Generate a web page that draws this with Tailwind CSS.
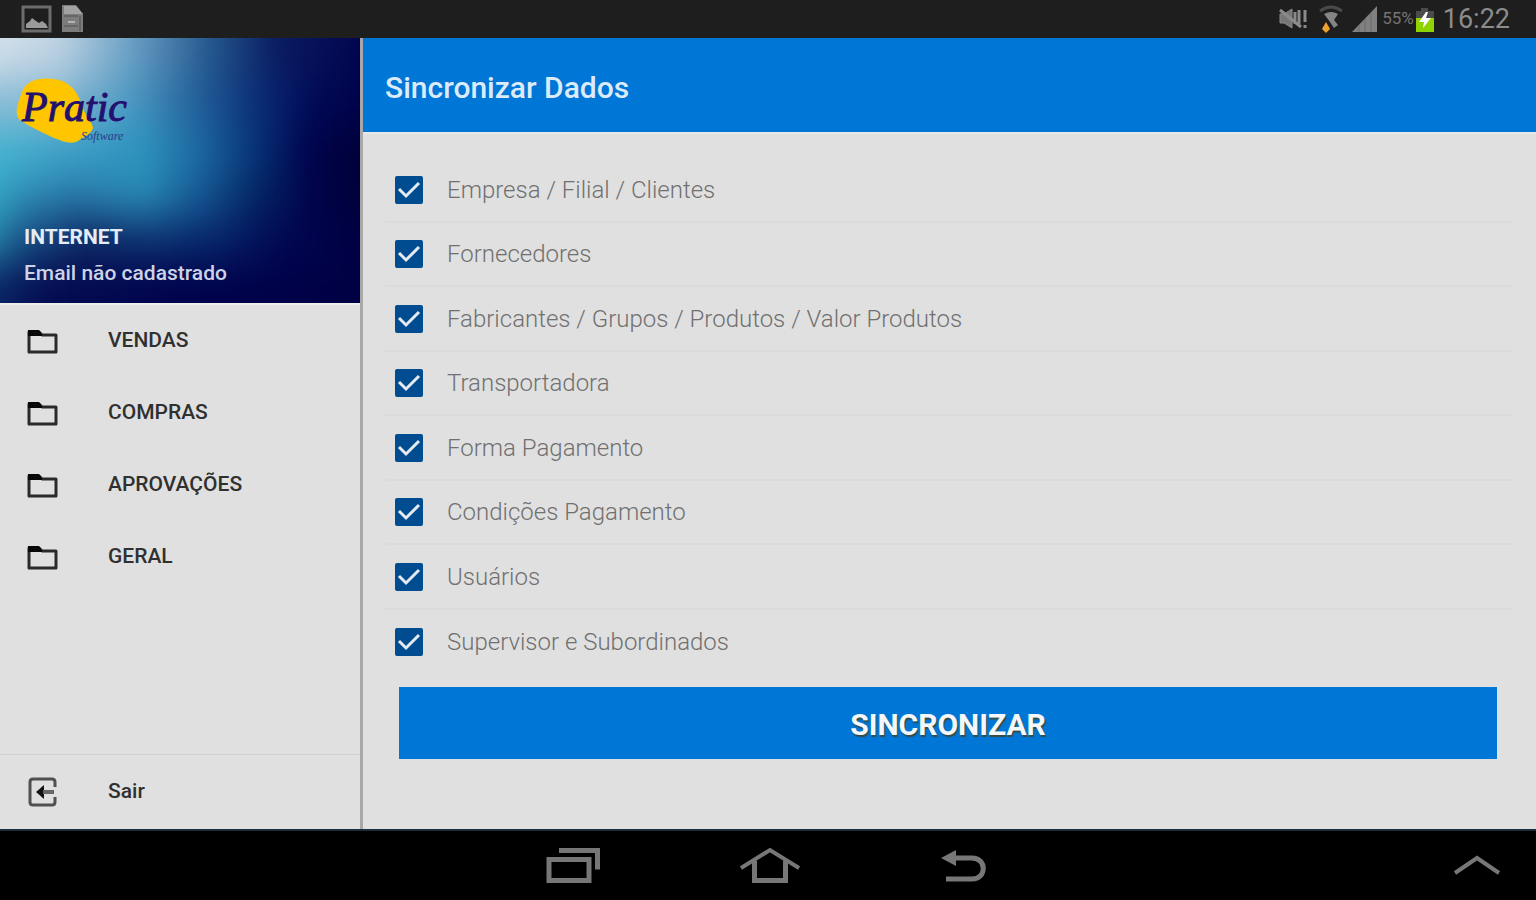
<!DOCTYPE html>
<html lang="pt-BR">
<head>
    <meta charset="UTF-8">
    <meta name="viewport" content="width=device-width, initial-scale=1.0">
    <title>Sincronizar Dados - Pratic</title>
    <script src="https://cdn.jsdelivr.net/npm/@tailwindcss/browser@4"></script>
</head>
<body class="flex flex-col min-h-screen bg-[#e0e0e0] font-[Roboto,sans-serif]">

    <!-- Barra de status -->
    <div class="flex items-center justify-between h-[38px] pl-[21px] pr-[26px] bg-[#1e1e1e] text-[#8c8c8c]">
        <div class="flex items-center gap-2">
            <svg class="w-8 h-7" viewBox="0 0 32 28" fill="none">
                <rect x="2" y="2" width="27" height="24" stroke="#6c6c6c" stroke-width="3"/>
                <path d="M5 23v-4l4-3 2-3 4 3 3 2 3-2 4 3 2 4z" fill="#9a9a9a"/>
            </svg>
            <svg class="w-6 h-7" viewBox="0 0 24 28">
                <path d="M1 0h14l7 9v18H1z" fill="#7c7c7c"/>
                <path d="M3 1h12l7 8H3z" fill="#a2a2a2"/>
                <path d="M3 11h14M3 21h14M19 11v15" stroke="#666" stroke-width="2"/>
                <path d="M7 17h7" stroke="#b4b4b4" stroke-width="2"/>
            </svg>
        </div>
        <div class="flex items-center">
            <svg class="w-8 h-6 mr-2" viewBox="0 0 32 24" fill="none" stroke="#8a8a8a" stroke-width="3">
                <path d="M1 7h4l8-5v19l-8-5H1z" fill="#777" stroke-width="1"/>
                <path d="M1 3l21 17M16 5v12M20 3v15M26 3v12M26 18v3"/>
            </svg>
            <svg class="w-6 h-7 mr-[9px]" viewBox="0 0 24 28" fill="none">
                <path d="M1 6q11-8 22 0" stroke="#4a4a4a" stroke-width="3"/>
                <path d="M5 9q7-4 14 0l-4 6 4 5-4 3-4-6z" fill="#858585"/>
                <path d="M7 17l4 7-4 4-4-4z" fill="#f0a030"/>
            </svg>
            <svg class="w-[26px] h-7" viewBox="0 0 26 28">
                <path d="M0 27L25 1v26z" fill="#808080"/>
                <path d="M7 20v7M13 14v13M19 8v19" stroke="#6a6a6a" stroke-width="1"/>
            </svg>
            <span class="ml-1 text-[17px] text-[#747474]">55%</span>
            <svg class="w-5 h-7 ml-px" viewBox="0 0 20 28">
                <path d="M6 3h7v3h6v8H1V6h5z" fill="#4b4b4b"/>
                <path d="M1 13h18v14H1z" fill="#8fd400"/>
                <path d="M11 7l-7 10h5l-1 6 8-10h-5l2-6z" fill="#fff"/>
            </svg>
            <span class="ml-2 text-[27px]">16:22</span>
        </div>
    </div>

    <div class="flex flex-1">
        <!-- Menu lateral -->
        <aside class="flex flex-col w-[363px] shrink-0 border-r-3 border-[#a8a8a8]">
            <header class="grid h-[267px] border-b-2 border-[#eeeeee] overflow-hidden">
                <svg class="col-start-1 row-start-1 w-full h-[265px]" viewBox="0 0 360 265" preserveAspectRatio="none">
                    <defs>
                        <linearGradient id="faixa1">
                            <stop offset="0.2" stop-color="#d2dfea"/>
                            <stop offset="0.3" stop-color="#bcd2e2"/>
                            <stop offset="0.42" stop-color="#6a9fc4"/>
                            <stop offset="0.55" stop-color="#24588e"/>
                            <stop offset="0.66" stop-color="#0a1c62"/>
                            <stop offset="0.83" stop-color="#00004a"/>
                        </linearGradient>
                        <linearGradient id="faixa2">
                            <stop offset="0.2" stop-color="#8cbcd6"/>
                            <stop offset="0.3" stop-color="#86b6d2"/>
                            <stop offset="0.42" stop-color="#4a98c2"/>
                            <stop offset="0.53" stop-color="#225e9a"/>
                            <stop offset="0.62" stop-color="#0c3278"/>
                            <stop offset="0.72" stop-color="#010a58"/>
                            <stop offset="0.83" stop-color="#000046"/>
                        </linearGradient>
                        <linearGradient id="faixa3">
                            <stop offset="0.2" stop-color="#44b2d0"/>
                            <stop offset="0.3" stop-color="#3ea2c8"/>
                            <stop offset="0.44" stop-color="#2c92be"/>
                            <stop offset="0.54" stop-color="#1a669e"/>
                            <stop offset="0.63" stop-color="#063074"/>
                            <stop offset="0.71" stop-color="#000450"/>
                            <stop offset="0.78" stop-color="#00003a"/>
                        </linearGradient>
                        <linearGradient id="faixa4">
                            <stop offset="0.17" stop-color="#34acc8"/>
                            <stop offset="0.25" stop-color="#2c88b2"/>
                            <stop offset="0.32" stop-color="#2676a6"/>
                            <stop offset="0.44" stop-color="#2888b4"/>
                            <stop offset="0.53" stop-color="#165a94"/>
                            <stop offset="0.62" stop-color="#042866"/>
                            <stop offset="0.72" stop-color="#00034a"/>
                            <stop offset="0.8" stop-color="#00003a"/>
                        </linearGradient>
                        <linearGradient id="faixa5">
                            <stop offset="0.16" stop-color="#2a98b6"/>
                            <stop offset="0.25" stop-color="#164a80"/>
                            <stop offset="0.34" stop-color="#0e2864"/>
                            <stop offset="0.46" stop-color="#0c3070"/>
                            <stop offset="0.56" stop-color="#06246a"/>
                            <stop offset="0.68" stop-color="#010652"/>
                            <stop offset="0.8" stop-color="#000042"/>
                        </linearGradient>
                        <linearGradient id="faixa6">
                            <stop offset="0.16" stop-color="#0c2c6a"/>
                            <stop offset="0.28" stop-color="#040c50"/>
                            <stop offset="0.5" stop-color="#00024c"/>
                            <stop offset="0.8" stop-color="#000044"/>
                        </linearGradient>
                        <filter id="borrao" x="-10%" y="-10%" width="120%" height="120%" color-interpolation-filters="sRGB">
                            <feGaussianBlur stdDeviation="10 20"/>
                        </filter>
                    </defs>
                    <g filter="url(#borrao)">
                        <rect x="-120" y="-80" width="600" height="118" fill="url(#faixa1)"/>
                        <rect x="-120" y="38" width="600" height="50" fill="url(#faixa2)"/>
                        <rect x="-120" y="88" width="600" height="50" fill="url(#faixa3)"/>
                        <rect x="-120" y="138" width="600" height="42" fill="url(#faixa4)"/>
                        <rect x="-120" y="180" width="600" height="45" fill="url(#faixa5)"/>
                        <rect x="-120" y="225" width="600" height="120" fill="url(#faixa6)"/>
                    </g>
                </svg>
                <div class="col-start-1 row-start-1 z-10 flex flex-col pl-6">
                    <svg class="w-[120px] h-[68px] mt-[39px] -ml-2" viewBox="0 0 120 68" role="img" aria-label="Pratic Software">
                        <path d="M6 15C10 3 24 0 38 2C54 4 62 15 67 31C70 40 76 45 77 51C74 58 67 60 62 64C55 68 46 64 38 61C26 55 14 50 4 43C-2 38 1 28 6 15z" fill="#ffc600"/>
                        <text x="6" y="44" font-family="Liberation Serif, serif" font-style="italic" font-size="42" fill="#24106e" stroke="#24106e">Pratic</text>
                        <text x="65" y="63" font-family="Liberation Serif, serif" font-style="italic" font-size="12" fill="#2c3c84">Software</text>
                    </svg>
                    <p class="mt-[76px] text-[21px] leading-8 font-bold text-[#e4edf5]">INTERNET</p>
                    <p class="mt-1 text-[21px] leading-8 font-medium text-[#cdd3e6]">Email não cadastrado</p>
                </div>
            </header>

            <nav class="flex flex-col text-[21px] font-medium text-[#303030]">
                <a href="#vendas" class="flex items-center h-[72px] pl-[26px] gap-[50px]">
                    <svg class="w-8 h-7" viewBox="0 0 32 28" fill="none"><path d="M3 5h10l3 3h14v17H3z" stroke="#2a2a2a" stroke-width="3" stroke-linejoin="round"/><path d="M2 3h11l3 4v2H2z" fill="#080808"/></svg>
                    VENDAS
                </a>
                <a href="#compras" class="flex items-center h-[72px] pl-[26px] gap-[50px]">
                    <svg class="w-8 h-7" viewBox="0 0 32 28" fill="none"><path d="M3 5h10l3 3h14v17H3z" stroke="#2a2a2a" stroke-width="3" stroke-linejoin="round"/><path d="M2 3h11l3 4v2H2z" fill="#080808"/></svg>
                    COMPRAS
                </a>
                <a href="#aprovacoes" class="flex items-center h-[72px] pl-[26px] gap-[50px]">
                    <svg class="w-8 h-7" viewBox="0 0 32 28" fill="none"><path d="M3 5h10l3 3h14v17H3z" stroke="#2a2a2a" stroke-width="3" stroke-linejoin="round"/><path d="M2 3h11l3 4v2H2z" fill="#080808"/></svg>
                    APROVAÇÕES
                </a>
                <a href="#geral" class="flex items-center h-[72px] pl-[26px] gap-[50px]">
                    <svg class="w-8 h-7" viewBox="0 0 32 28" fill="none"><path d="M3 5h10l3 3h14v17H3z" stroke="#2a2a2a" stroke-width="3" stroke-linejoin="round"/><path d="M2 3h11l3 4v2H2z" fill="#080808"/></svg>
                    GERAL
                </a>
            </nav>

            <a href="#sair" class="flex items-center h-[75px] mt-auto pl-[26px] gap-[50px] border-t border-[#d0d0d0] text-[21px] font-medium text-[#303030]">
                <svg class="w-8 h-8" viewBox="0 0 32 32" fill="none">
                    <path d="M29 11V6q0-3-3-3H7Q4 3 4 6v20q0 3 3 3h19q3 0 3-3v-5" stroke="#505050" stroke-width="3"/>
                    <path d="M10 16l8-7v14z" fill="#111"/>
                    <path d="M17 16h11" stroke="#666" stroke-width="4"/>
                </svg>
                Sair
            </a>
        </aside>

        <!-- Conteúdo -->
        <main class="flex flex-col flex-1">
            <h1 class="flex items-center h-[96px] pl-[22px] pt-1 border-b-2 border-[#e8e8e8] bg-[#0076d7] text-[30px] font-medium text-[#dcebfa]">Sincronizar Dados</h1>

            <form class="flex flex-col pt-6 pl-[22px] pr-[23px]">
                <div class="grid grid-rows-8 h-[516px] divide-y-2 divide-[#dbdbdb] text-2xl font-light text-[#707070]">
                    <label class="flex items-center gap-6 pl-[10px] pt-px">
                        <span class="grid size-7">
                            <input type="checkbox" checked class="peer col-start-1 row-start-1 size-7 appearance-none rounded-xs border-2 border-[#004c90] checked:bg-[#004c90]">
                            <svg class="col-start-1 row-start-1 size-7 pointer-events-none invisible peer-checked:visible" viewBox="0 0 28 28" fill="none" stroke="#e4eaf0" stroke-width="3"><path d="M4 13l7 7L24 7"/></svg>
                        </span>
                        Empresa / Filial / Clientes
                    </label>
                    <label class="flex items-center gap-6 pl-[10px] pt-px">
                        <span class="grid size-7">
                            <input type="checkbox" checked class="peer col-start-1 row-start-1 size-7 appearance-none rounded-xs border-2 border-[#004c90] checked:bg-[#004c90]">
                            <svg class="col-start-1 row-start-1 size-7 pointer-events-none invisible peer-checked:visible" viewBox="0 0 28 28" fill="none" stroke="#e4eaf0" stroke-width="3"><path d="M4 13l7 7L24 7"/></svg>
                        </span>
                        Fornecedores
                    </label>
                    <label class="flex items-center gap-6 pl-[10px] pt-px">
                        <span class="grid size-7">
                            <input type="checkbox" checked class="peer col-start-1 row-start-1 size-7 appearance-none rounded-xs border-2 border-[#004c90] checked:bg-[#004c90]">
                            <svg class="col-start-1 row-start-1 size-7 pointer-events-none invisible peer-checked:visible" viewBox="0 0 28 28" fill="none" stroke="#e4eaf0" stroke-width="3"><path d="M4 13l7 7L24 7"/></svg>
                        </span>
                        Fabricantes / Grupos / Produtos / Valor Produtos
                    </label>
                    <label class="flex items-center gap-6 pl-[10px] pt-px">
                        <span class="grid size-7">
                            <input type="checkbox" checked class="peer col-start-1 row-start-1 size-7 appearance-none rounded-xs border-2 border-[#004c90] checked:bg-[#004c90]">
                            <svg class="col-start-1 row-start-1 size-7 pointer-events-none invisible peer-checked:visible" viewBox="0 0 28 28" fill="none" stroke="#e4eaf0" stroke-width="3"><path d="M4 13l7 7L24 7"/></svg>
                        </span>
                        Transportadora
                    </label>
                    <label class="flex items-center gap-6 pl-[10px] pt-px">
                        <span class="grid size-7">
                            <input type="checkbox" checked class="peer col-start-1 row-start-1 size-7 appearance-none rounded-xs border-2 border-[#004c90] checked:bg-[#004c90]">
                            <svg class="col-start-1 row-start-1 size-7 pointer-events-none invisible peer-checked:visible" viewBox="0 0 28 28" fill="none" stroke="#e4eaf0" stroke-width="3"><path d="M4 13l7 7L24 7"/></svg>
                        </span>
                        Forma Pagamento
                    </label>
                    <label class="flex items-center gap-6 pl-[10px] pt-px">
                        <span class="grid size-7">
                            <input type="checkbox" checked class="peer col-start-1 row-start-1 size-7 appearance-none rounded-xs border-2 border-[#004c90] checked:bg-[#004c90]">
                            <svg class="col-start-1 row-start-1 size-7 pointer-events-none invisible peer-checked:visible" viewBox="0 0 28 28" fill="none" stroke="#e4eaf0" stroke-width="3"><path d="M4 13l7 7L24 7"/></svg>
                        </span>
                        Condições Pagamento
                    </label>
                    <label class="flex items-center gap-6 pl-[10px] pt-px">
                        <span class="grid size-7">
                            <input type="checkbox" checked class="peer col-start-1 row-start-1 size-7 appearance-none rounded-xs border-2 border-[#004c90] checked:bg-[#004c90]">
                            <svg class="col-start-1 row-start-1 size-7 pointer-events-none invisible peer-checked:visible" viewBox="0 0 28 28" fill="none" stroke="#e4eaf0" stroke-width="3"><path d="M4 13l7 7L24 7"/></svg>
                        </span>
                        Usuários
                    </label>
                    <label class="flex items-center gap-6 pl-[10px]">
                        <span class="grid size-7">
                            <input type="checkbox" checked class="peer col-start-1 row-start-1 size-7 appearance-none rounded-xs border-2 border-[#004c90] checked:bg-[#004c90]">
                            <svg class="col-start-1 row-start-1 size-7 pointer-events-none invisible peer-checked:visible" viewBox="0 0 28 28" fill="none" stroke="#e4eaf0" stroke-width="3"><path d="M4 13l7 7L24 7"/></svg>
                        </span>
                        Supervisor e Subordinados
                    </label>
                </div>
                <button type="button" class="h-[72px] mt-[13px] ml-[14px] mr-4 pt-[3px] bg-[#0076d7] text-[30px] font-bold text-[#f4f8fc] text-shadow-[1px_2px_1px_#3a4a40]">SINCRONIZAR</button>
            </form>
        </main>
    </div>

    <!-- Barra de navegação do Android -->
    <footer class="grid grid-cols-[1fr_auto_1fr] items-center h-[71px] px-[35px] bg-black border-t-2 border-[#1c2c36]">
        <div></div>
        <div class="flex items-center gap-[138px]">
            <button type="button" aria-label="Recentes">
                <svg class="w-14 h-10" viewBox="0 0 56 40" fill="none" stroke="#777" stroke-width="5"><path d="M3 13.500h40v21H3zM13 4.500h38.500v19"/></svg>
            </button>
            <button type="button" aria-label="Início">
                <svg class="w-[60px] h-10" viewBox="0 0 60 40" fill="none" stroke="#777" stroke-width="5"><path d="M1 22L30 4l29 18" stroke-width="4"/><path d="M14.500 15v19.500h31V15"/></svg>
            </button>
            <button type="button" aria-label="Voltar">
                <svg class="w-[52px] h-10" viewBox="0 0 52 40" fill="none"><path d="M14 12h20c15 0 15 21 0 21H8" stroke="#777" stroke-width="5"/><path d="M3 12l15-8v16z" fill="#777"/></svg>
            </button>
        </div>
        <button type="button" class="justify-self-end" aria-label="Expandir">
            <svg class="w-12 h-6" viewBox="0 0 48 24" fill="none" stroke="#777" stroke-width="4"><path d="M2 19L24 4l22 15"/></svg>
        </button>
    </footer>
</body>
</html>
